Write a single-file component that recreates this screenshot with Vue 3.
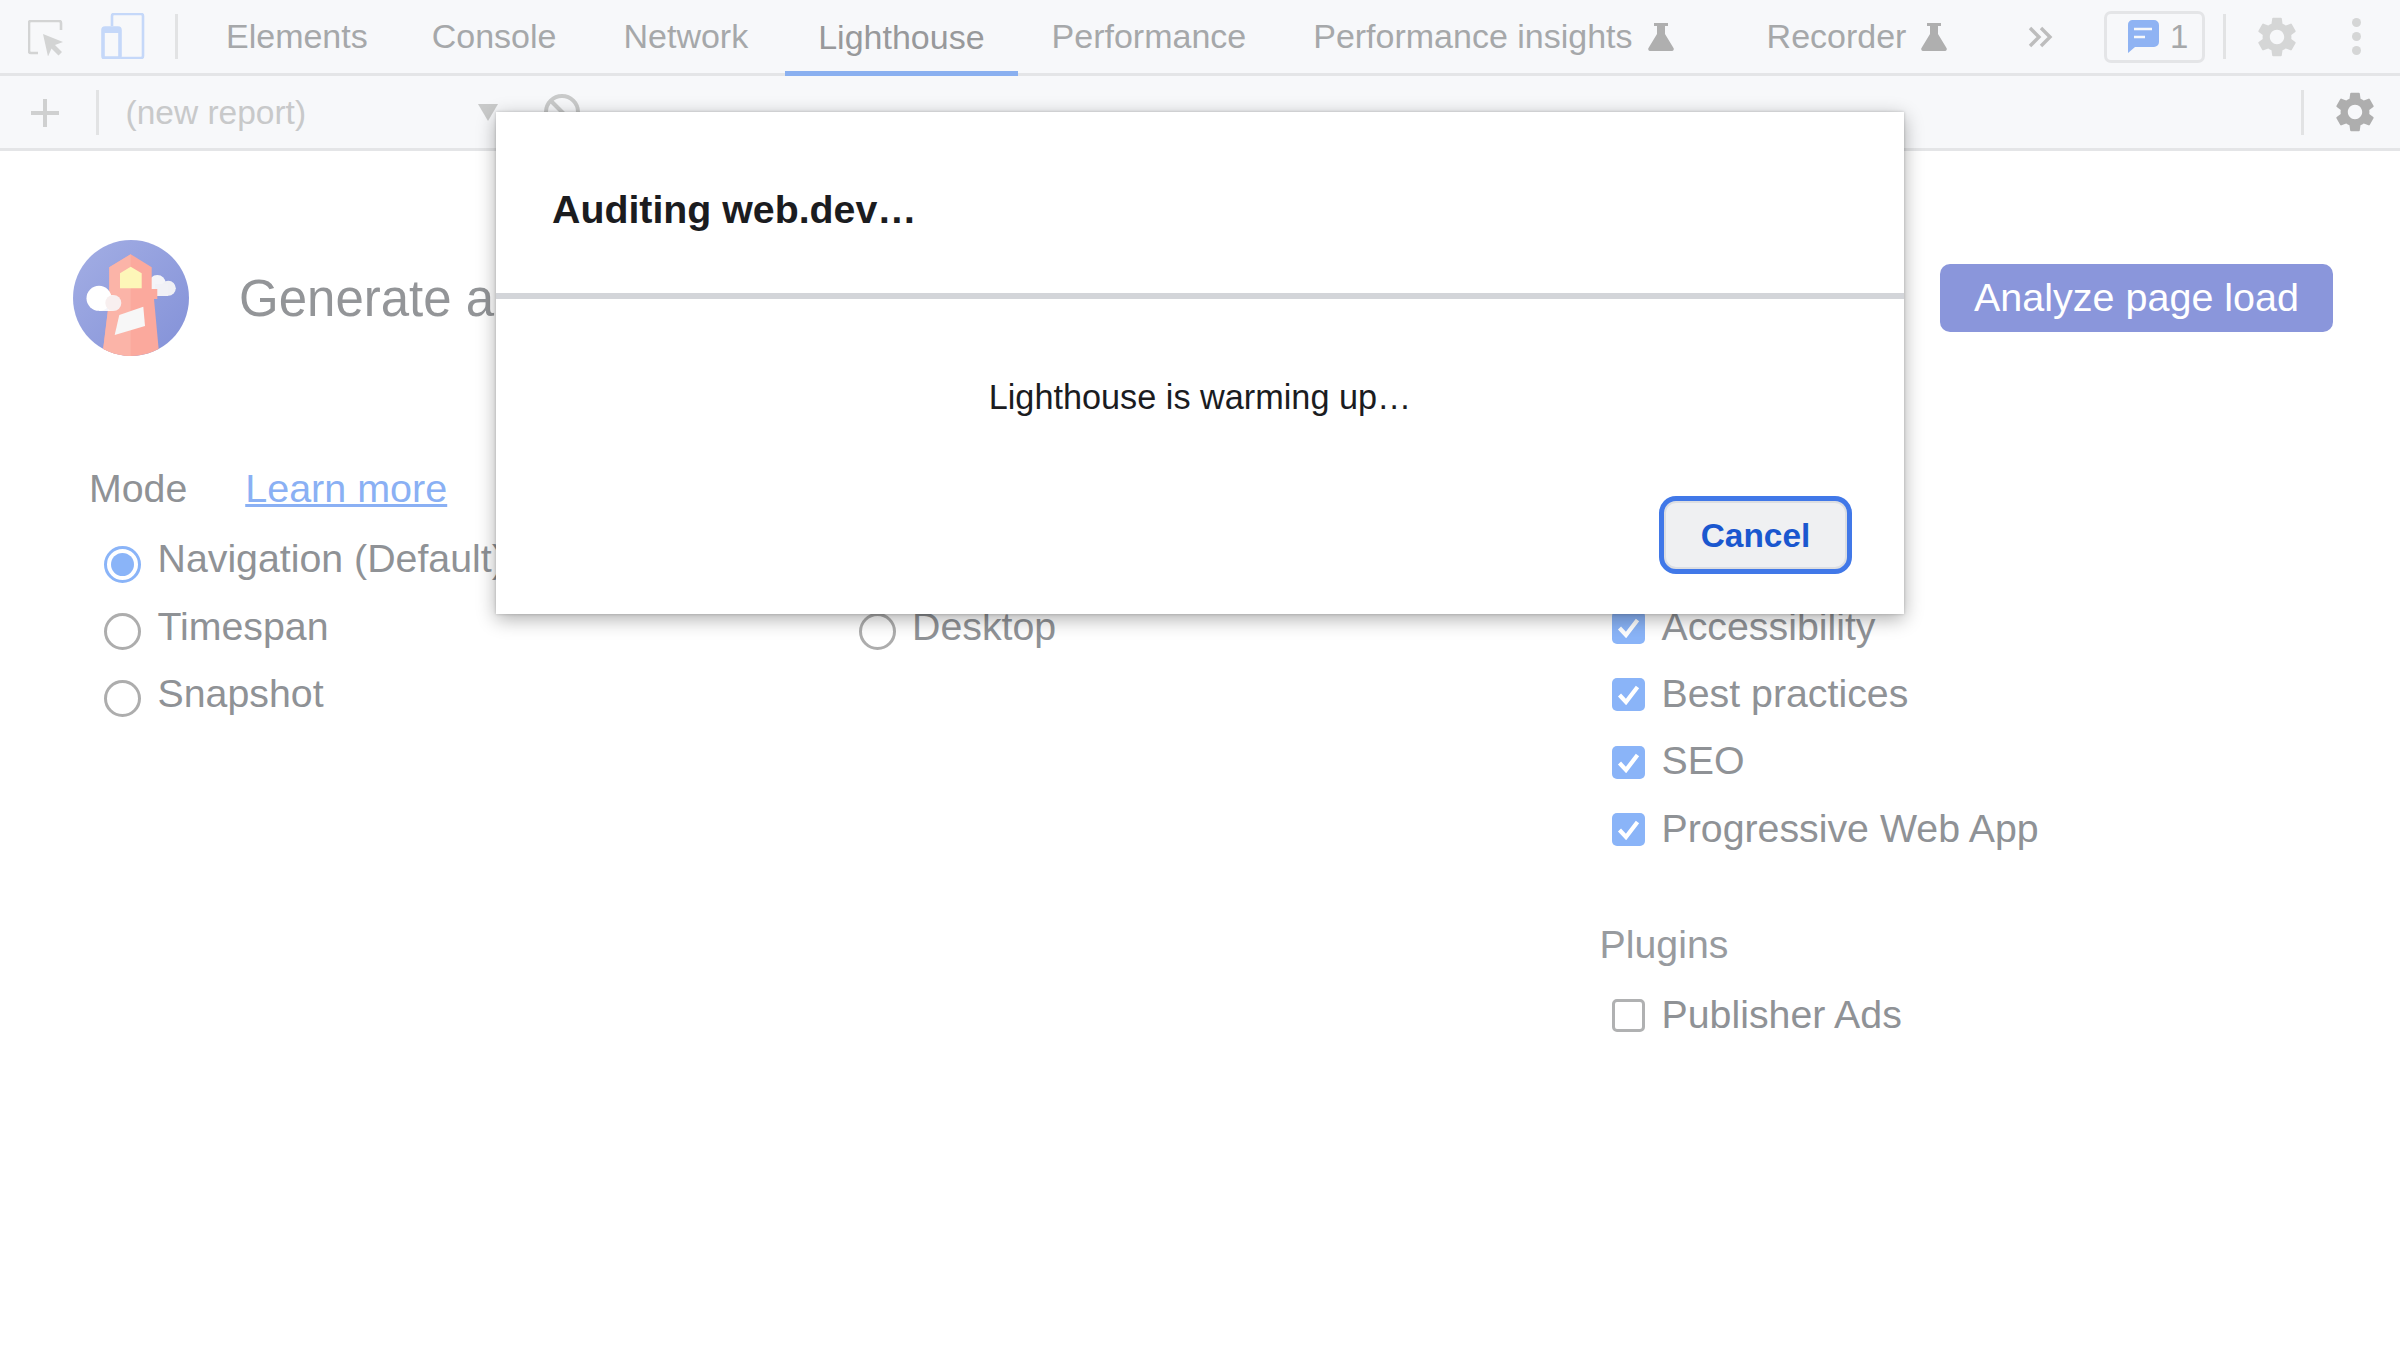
<script setup>
const tabs = [
  { name: 'Elements' },
  { name: 'Console' },
  { name: 'Network' },
  { name: 'Lighthouse', active: true },
  { name: 'Performance' },
  { name: 'Performance insights', flask: true },
  { name: 'Recorder', flask: true },
]
const modes = [
  { label: 'Navigation (Default)', on: true },
  { label: 'Timespan' },
  { label: 'Snapshot' },
]
// The first row of these two columns lies wholly behind the dialog.
const devices = ['', 'Desktop']
const categories = ['', 'Accessibility', 'Best practices', 'SEO', 'Progressive Web App']
const gear = 'M19.14 12.94c.04-.3.06-.61.06-.94 0-.32-.02-.64-.07-.94l2.03-1.58a.49.49 0 0 0 .12-.61l-1.92-3.32a.488.488 0 0 0-.59-.22l-2.39.96c-.5-.38-1.03-.7-1.62-.94l-.36-2.54a.484.484 0 0 0-.48-.41h-3.84c-.24 0-.43.17-.47.41l-.36 2.54c-.59.24-1.13.57-1.62.94l-2.39-.96c-.22-.08-.47 0-.59.22L2.74 8.87c-.12.21-.08.47.12.61l2.03 1.58c-.05.3-.09.63-.09.94s.02.64.07.94l-2.03 1.58a.49.49 0 0 0-.12.61l1.92 3.32c.12.22.37.29.59.22l2.39-.96c.5.38 1.03.7 1.62.94l.36 2.54c.05.24.24.41.48.41h3.84c.24 0 .44-.17.47-.41l.36-2.54c.59-.24 1.13-.56 1.62-.94l2.39.96c.22.08.47 0 .59-.22l1.92-3.32c.12-.22.07-.47-.12-.61l-2.01-1.58zM12 15.6c-1.98 0-3.6-1.62-3.6-3.6s1.62-3.6 3.6-3.6 3.6 1.62 3.6 3.6-1.62 3.6-3.6 3.6z'
</script>

<template>
  <div class="page">
    <header class="bar tabbar">
      <svg class="ico inspect" width="36" height="36" viewBox="0 0 36 36">
        <path d="M10 33H3a2 2 0 0 1-2-2V3a2 2 0 0 1 2-2h28a2 2 0 0 1 2 2v7" fill="none" stroke="#d3d4d4" stroke-width="2.6"/>
        <path d="M15 14l20 8-8 3 7 7-3.5 3.5-7-7-3.500 8z" fill="#d3d4d4"/>
      </svg>
      <svg class="ico device" width="44" height="46" viewBox="0 0 44 46">
        <path d="M11 13V3a2 2 0 0 1 2-2h27a2 2 0 0 1 2 2v40a2 2 0 0 1-2 2H20" fill="none" stroke="#c5d8f9" stroke-width="2.6"/>
        <rect x="2" y="15" width="17" height="30" rx="2" fill="none" stroke="#c5d8f9" stroke-width="3.600"/>
        <rect x="1" y="14" width="19" height="6" rx="2" fill="#c5d8f9"/>
      </svg>
      <span class="vline first"></span>
      <nav class="tabs">
        <div v-for="t in tabs" :key="t.name" class="tab" :class="{ active: t.active, flasked: t.flask }">
          <span>{{ t.name }}</span>
          <svg v-if="t.flask" class="flask" width="26" height="28" viewBox="0 0 26 28">
            <path d="M6 0h14v3h-3v8l8.500 14a2 2 0 0 1-2 3H2.500a2 2 0 0 1-2-3L9 11V3H6z" fill="#afafaf"/>
          </svg>
        </div>
      </nav>
      <div class="tab-right">
        <svg class="chev" width="26" height="22" viewBox="0 0 26 22">
          <path d="M2 2l9 9-9 9M13 2l9 9-9 9" fill="none" stroke="#bdbdbd" stroke-width="3.400"/>
        </svg>
        <div class="badge">
          <svg width="32" height="33" viewBox="0 0 32 33">
            <path d="M5 0h22a5 5 0 0 1 5 5v17a5 5 0 0 1-5 5H8l-7 6V5a5 5 0 0 1 4-5z" fill="#8fb3f3"/>
            <path d="M7 9h18M7 17h11" stroke="#f7f8fa" stroke-width="2.600"/>
          </svg>
          <span>1</span>
        </div>
        <span class="vline v2"></span>
        <svg class="gear-top" width="40" height="40" viewBox="2.500 2 19 20"><path :d="gear" fill="#d5d6d6"/></svg>
        <div class="dots"><i></i><i></i><i></i></div>
      </div>
    </header>

    <div class="bar toolbar">
      <svg class="plus" width="28" height="28" viewBox="0 0 28 28"><path d="M14 0v28M0 14h28" stroke="#cfd0d0" stroke-width="4"/></svg>
      <span class="vline v3"></span>
      <span class="report">(new report)</span>
      <span class="tri"></span>
      <svg class="block" width="38" height="38" viewBox="0 0 38 38">
        <circle cx="19" cy="19" r="16" fill="none" stroke="#c9caca" stroke-width="4"/>
        <path d="M8 8l22 22" stroke="#c9caca" stroke-width="4"/>
      </svg>
      <span class="vline v4"></span>
      <svg class="gear-bot" width="40" height="40" viewBox="2.500 2 19 20"><path :d="gear" fill="#aeaeae"/></svg>
    </div>

    <main class="main">
      <section class="hero">
        <svg class="logo" width="116" height="116" viewBox="0 0 116 116">
          <defs>
            <clipPath id="disc"><circle cx="58" cy="58" r="58"/></clipPath>
            <linearGradient id="sky" x1="0" y1="0" x2="1" y2="1">
              <stop offset="0" stop-color="#a3aee4"/>
              <stop offset="1" stop-color="#8391d8"/>
            </linearGradient>
          </defs>
          <g clip-path="url(#disc)">
            <rect width="116" height="116" fill="url(#sky)"/>
            <circle cx="84.300" cy="43.500" r="8.500" fill="#f4f4f8"/>
            <circle cx="95.300" cy="48.300" r="7.500" fill="#f0f0f5"/>
            <rect x="82" y="44" width="13" height="12" fill="#f1f1f6"/>
            <path d="M57.700 14.300L78.700 27.300V49H84.300V59H81L86.300 116H29.300L36.300 59V27.300z" fill="#fba99d"/>
            <path d="M57.700 14.300V116H29.300L36.300 59V27.300z" fill="#fbb4a8"/>
            <path d="M47 33.300L57.700 26.700 68.700 33.300V48.300H47z" fill="#fdf6b8"/>
            <path d="M46.300 75L70.300 66.700 72 86 41.700 95z" fill="#f7f7f7"/>
            <circle cx="26" cy="58.300" r="12.500" fill="#fff"/>
            <rect x="26" y="55" width="14" height="16" fill="#fff" opacity=".9"/>
            <circle cx="40.300" cy="63" r="8" fill="#f8efef"/>
          </g>
        </svg>
        <h1 class="headline">Generate a</h1>
        <button class="analyze">Analyze page load</button>
      </section>

      <section class="grid">
        <div class="col">
          <div class="head">Mode <a class="learn">Learn more</a></div>
          <label v-for="m in modes" :key="m.label" class="row">
            <span class="radio" :class="{ on: m.on }"></span>{{ m.label }}
          </label>
        </div>
        <div class="col">
          <div class="head"></div>
          <label v-for="d in devices" :key="d" class="row">
            <template v-if="d"><span class="radio"></span>{{ d }}</template>
          </label>
        </div>
        <div class="col">
          <div class="head"></div>
          <label v-for="c in categories" :key="c" class="row">
            <template v-if="c">
              <span class="check">
                <svg width="23" height="21" viewBox="0 0 23 21"><path d="M2.500 11l6.500 7L20.500 3" fill="none" stroke="#fff" stroke-width="4.200"/></svg>
              </span>{{ c }}
            </template>
          </label>
          <div class="head plugins">Plugins</div>
          <label class="row"><span class="check off"></span>Publisher Ads</label>
        </div>
      </section>
    </main>

    <div class="modal">
      <div class="modal-head">Auditing web.dev…</div>
      <div class="modal-rule"></div>
      <div class="modal-status">Lighthouse is warming up…</div>
      <div class="modal-foot"><button class="cancel">Cancel</button></div>
    </div>
  </div>
</template>

<style scoped>
.page {
  position: relative;
  width: 2400px;
  height: 1350px;
  overflow: hidden;
  background: #fff;
  font-family: "Liberation Sans", Arial, sans-serif;
}
.bar {
  display: flex;
  align-items: center;
  box-sizing: border-box;
  background: #f7f8fa;
  border-bottom: 3px solid #e4e5e7;
}
.tabbar { height: 76px; padding-left: 28px; }
.toolbar { height: 75px; padding-left: 31px; }
.ico { flex: none; }
.inspect { margin-top: 2px; }
.device { margin-left: 37px; margin-top: -1px; }
.vline { flex: none; width: 3px; height: 45px; background: #e2e3e4; }
.first { margin-left: 30px; }
.tabs { display: flex; align-self: stretch; margin-left: 14.500px; }
.tab {
  display: flex;
  align-items: center;
  padding: 0 33.500px 3px;
  color: #a6a8aa;
  font-size: 34px;
  margin-bottom: -3px;
}
.tab:first-child { margin-right: -3px; }
.tab:nth-child(3) { margin-right: 3px; }
.tab.active { color: #98999b; border-bottom: 5px solid #8ab0f0; box-sizing: border-box; padding-top: 3px; padding-bottom: 0; }
.tab.flasked { padding-right: 0; margin-right: 59.500px; }
.tab.flasked:last-child { margin-right: 0; }
.flask { margin-left: 15px; }
.tab-right { display: flex; align-items: center; margin-left: auto; }
.chev { margin-right: 50px; }
.badge {
  box-sizing: border-box;
  width: 101px;
  height: 52px;
  display: flex;
  align-items: center;
  padding-left: 20px;
  gap: 11px;
  border: 3px solid #e4e5e7;
  border-radius: 7px;
  color: #a6a8aa;
  font-size: 33px;
}
.v2 { margin-left: 18px; }
.gear-top { margin-left: 31px; }
.dots { display: flex; flex-direction: column; gap: 5px; margin-left: 55px; margin-right: 39px; }
.dots i { width: 9px; height: 9px; border-radius: 50%; background: #d5d6d6; }
.plus { margin-top: 2px; }
.v3 { margin-left: 37px; }
.report { margin: 2px 0 0 26.500px; color: #c8c9ca; font-size: 33.500px; }
.tri {
  width: 0;
  height: 0;
  margin-left: 172px;
  border-left: 10px solid transparent;
  border-right: 10px solid transparent;
  border-top: 17px solid #c9caca;
}
.block { margin-left: 45px; }
.v4 { margin-left: auto; }
.gear-bot { margin-left: 31px; margin-right: 25px; }
.main { padding: 89px 67px 0 73px; }
.hero { display: flex; align-items: center; }
.logo { flex: none; }
.headline {
  margin: 1px 0 0 50px;
  color: #939598;
  font-size: 51px;
  font-weight: 400;
  white-space: nowrap;
}
.analyze {
  margin-left: auto;
  width: 393px;
  height: 68px;
  padding-bottom: 2px;
  border: 0;
  border-radius: 10px;
  background: #8a96db;
  color: #fff;
  font: 39.500px "Liberation Sans", Arial, sans-serif;
}
.grid {
  display: grid;
  grid-template-columns: 754.500px 756px 1fr;
  margin: 110px 0 0 16px;
}
.head {
  height: 44px;
  line-height: 44px;
  margin-bottom: 15px;
  color: #8f9296;
  font-size: 39.300px;
}
.learn { margin-left: 47px; color: #8ab0f4; text-decoration: underline; font-size: 39.500px; }
.plugins { margin-top: 60px; color: #989b9f; }
.row {
  display: flex;
  align-items: center;
  height: 67.400px;
  padding-left: 15px;
  color: #8f9296;
  font-size: 39.300px;
  white-space: nowrap;
}
.radio {
  position: relative;
  flex: none;
  box-sizing: border-box;
  width: 37px;
  height: 37px;
  margin: 11px 16.500px 0 0;
  border: 3px solid #adadad;
  border-radius: 50%;
  background: #fff;
}
.radio.on { border-color: #8ab4f8; }
.radio.on::after {
  content: "";
  position: absolute;
  inset: 4px;
  border-radius: 50%;
  background: #8ab4f8;
}
.check {
  flex: none;
  box-sizing: border-box;
  display: flex;
  align-items: center;
  justify-content: center;
  width: 33px;
  height: 33px;
  margin: 3px 17px 0 -3px;
  border-radius: 5px;
  background: #8ab4f8;
}
.check.off { margin-top: 1px; background: #fff; border: 3px solid #b0b1b2; }
.modal {
  position: absolute;
  left: 496px;
  top: 112px;
  width: 1408px;
  height: 502px;
  background: #fff;
  box-shadow: 0 5px 18px rgba(0, 0, 0, .32), 0 0 3px rgba(0, 0, 0, .2);
}
.modal-head {
  box-sizing: border-box;
  height: 181px;
  padding: 75px 0 0 56px;
  color: #1b1c1f;
  font-size: 39.300px;
  font-weight: 700;
  line-height: 44px;
}
.modal-rule { height: 6px; background: #d3d5d9; }
.modal-status {
  margin-top: 78px;
  height: 40px;
  line-height: 40px;
  text-align: center;
  color: #1b1c1f;
  font-size: 34.250px;
}
.modal-foot { display: flex; justify-content: flex-end; margin-top: 79px; padding-right: 52px; }
.cancel {
  box-sizing: border-box;
  width: 193px;
  height: 78px;
  padding-top: 3px;
  border: 5px solid #4178e8;
  border-radius: 17px;
  background: #eff0f2;
  box-shadow: inset 0 0 0 2px #dcdee2;
  color: #1a57cf;
  font: 700 33.400px "Liberation Sans", Arial, sans-serif;
}
</style>
